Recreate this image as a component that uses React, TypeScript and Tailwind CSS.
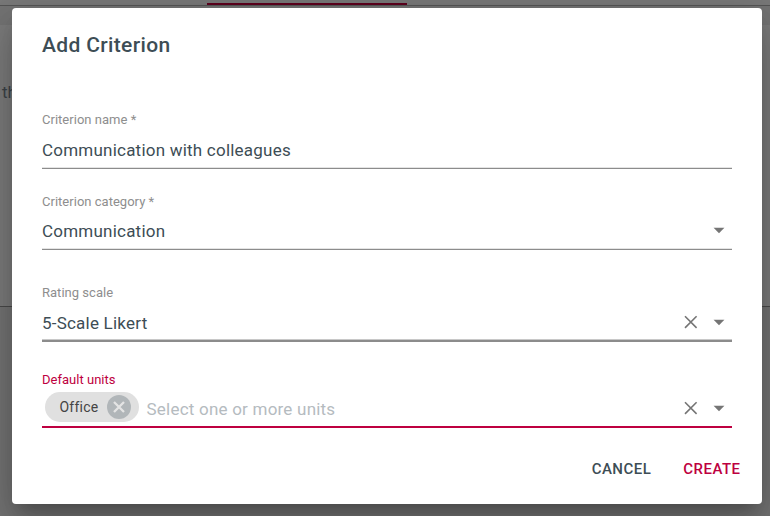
import type { ReactNode } from 'react';
import clsx from 'clsx';

function ArrowIcon() {
  return (
    <svg viewBox="0 0 24 24" className="size-[26px] fill-[#757575]"><path d="M7 10l5 5 5-5z" /></svg>
  );
}

function ClearIcon() {
  return (
    <svg viewBox="0 0 22 22" className="size-[22px] stroke-[#757575]" strokeWidth="1.6">
      <path d="M5 5.3l11.6 11.6M16.6 5.3L5 16.9" />
    </svg>
  );
}

function CancelIcon() {
  return (
    <svg viewBox="0 0 24 24" className="size-6">
      <circle cx="12" cy="12" r="12" className="fill-[#b1b6b9]" />
      <path d="M7 7l10 10M17 7L7 17" className="stroke-[#e4e4e4]" strokeWidth="2.3" />
    </svg>
  );
}

type FieldProps = { label: string; className: string; line: string; rowClass?: string; iconClass?: string; clear?: boolean; arrow?: boolean; active?: boolean; children: ReactNode };

function Field({ label, className, line, rowClass, iconClass, clear, arrow, active, children }: FieldProps) {
  return (
    <div className={clsx('flex flex-col', className)}>
      <label className={clsx('h-4 text-[13px] leading-4 tracking-[0.02px]', active ? 'text-[#be0040]' : 'text-[#8e8e8e]')}>{label}</label>
      <div className={clsx('flex flex-1 items-center', line)}>
        <div className={clsx('flex flex-1 items-center text-[17px] leading-5 tracking-[0.22px]', rowClass)}>{children}</div>
        <div className={clsx('flex items-center gap-1', iconClass)}>
          {clear && <ClearIcon />}
          {arrow && <ArrowIcon />}
        </div>
      </div>
    </div>
  );
}

export default function App() {
  return (
    <div className="relative h-[516px] w-[770px] overflow-hidden bg-[#747474] font-[Roboto,sans-serif] text-[#3d4d55]">
      <div className="h-[5px] bg-[#797979]">
        <div className="ml-[207px] h-full w-[200px] border-b-2 border-[#5f001e]" />
      </div>
      <div className="h-5 border-t border-[#555] bg-[#747474]" />
      <div className="h-[282px] border-b border-[#4a4a4a] bg-[#7c7c7c] pt-[57px] pl-0.5 text-[17px] leading-5 text-[#3c4348]">the</div>
      <div className="h-[209px] bg-[#747474]" />

      <div className="absolute inset-x-2 top-2 left-3 flex h-[496px] flex-col rounded-[4px] bg-white px-[30px] shadow-[0_11px_15px_-7px_rgba(0,0,0,0.2),0_24px_38px_3px_rgba(0,0,0,0.14),0_9px_46px_8px_rgba(0,0,0,0.12)]">
        <h2 className="h-[104px] pt-[25px] text-[21px] leading-6 font-medium tracking-[0.35px]">Add Criterion</h2>
        <Field label="Criterion name *" className="h-[57px]" line="border-b border-[#8c8c8c] shadow-[inset_0_-1px_#e4e4e4]" rowClass="pt-[3px]">Communication with colleagues</Field>
        <Field label="Criterion category *" className="mt-[25px] h-[56px]" line="border-b border-[#8c8c8c] shadow-[inset_0_-1px_#e4e4e4]" rowClass="pt-0.5" arrow>Communication</Field>
        <Field label="Rating scale" className="mt-[35px] h-[57px]" line="border-b-2 border-[#8c8c8c] shadow-[inset_0_-1px_#c8c8c8]" rowClass="pt-1" iconClass="pt-0.5" clear arrow>5-Scale Likert</Field>
        <Field label="Default units" className="mt-[30px] h-[56px]" line="border-b-2 border-[#be0040]" iconClass="pt-px" clear arrow active>
          <span className="ml-[3px] flex h-[30px] w-[94px] items-center justify-between rounded-full bg-[#e0e0e0] pr-2 pl-[14.5px] text-[14px] text-[#444]">Office<CancelIcon /></span>
          <span className="ml-[7.5px] pt-1 text-[#b5bbbf]">Select one or more units</span>
        </Field>
        <div className="-mr-[8.5px] mt-6 flex justify-end gap-8 text-[15px] leading-[34px] font-medium tracking-[0.48px]">
          <button>CANCEL</button>
          <button className="text-[#be0040]">CREATE</button>
        </div>
      </div>
    </div>
  );
}
